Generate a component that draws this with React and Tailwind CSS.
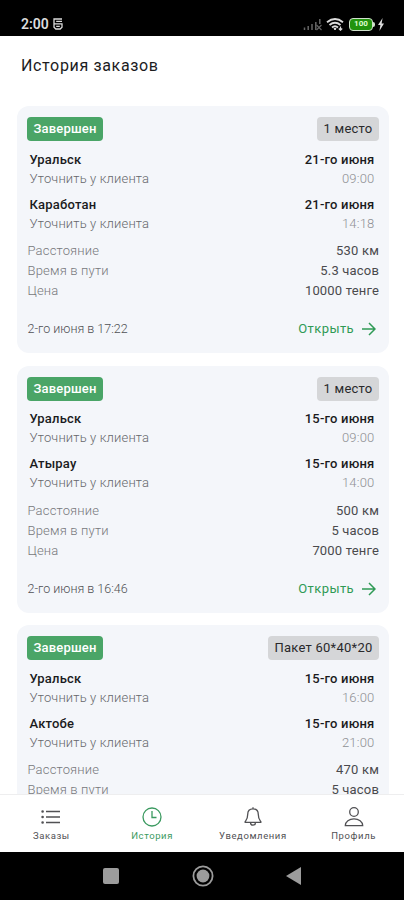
import React from "react";

const orders = [
  {
    id: 1,
    status: "Завершен",
    size: "1 место",
    from: { city: "Уральск", date: "21-го июня", time: "09:00" },
    to: { city: "Каработан", date: "21-го июня", time: "14:18" },
    distance: "530 км",
    duration: "5.3 часов",
    price: "10000 тенге",
    createdAt: "2-го июня в 17:22",
  },
  {
    id: 2,
    status: "Завершен",
    size: "1 место",
    from: { city: "Уральск", date: "15-го июня", time: "09:00" },
    to: { city: "Атырау", date: "15-го июня", time: "14:00" },
    distance: "500 км",
    duration: "5 часов",
    price: "7000 тенге",
    createdAt: "2-го июня в 16:46",
  },
  {
    id: 3,
    status: "Завершен",
    size: "Пакет 60*40*20",
    from: { city: "Уральск", date: "15-го июня", time: "16:00" },
    to: { city: "Актобе", date: "15-го июня", time: "21:00" },
    distance: "470 км",
    duration: "5 часов",
  },
];

const StatusBar = () => (
  <div className="flex h-9 shrink-0 items-center justify-between bg-black pt-3 pl-[21px] pr-5 text-[#dcdcdc]">
    <div className="flex items-center gap-1">
      <span className="text-[14px] leading-none font-semibold">2:00</span>
      <svg width="10" height="12" viewBox="0 0 10 12" fill="none" stroke="currentColor" strokeWidth="1.3">
        <path d="M9 1H1v8.2L2.8 11h4.4L9 9.2V5.8H1M3.2 3.4H9M3.2 8.3h3.6" />
      </svg>
    </div>
    <div className="flex items-center">
      <svg width="20" height="13" viewBox="0 0 20 13" fill="none" stroke="#666" strokeWidth="1.5">
        <path d="M1.5 12V9.5M5.2 12V8M9 12V6M12.8 12V4M16.8 6V1" />
        <path d="M13.5 7l5 5M18.5 7l-5 5" strokeWidth="1.1" />
      </svg>
      <svg className="ml-[3px]" width="18" height="13" viewBox="0 0 18 13" fill="none" stroke="currentColor" strokeWidth="1.9">
        <path d="M1 4.2Q9-2 17 4.2M3.5 7Q9 2.6 14.5 7M6 9.5Q9 7 12 9.5" />
        <path d="M8 10.5L9 12l1-1.5z" fill="currentColor" strokeWidth="1" />
        <path d="M14.5 8.5v3.5M12.8 10.5l1.7 1.7 1.7-1.7" strokeWidth="1.2" />
      </svg>
      <div className="ml-[5px] flex h-[13px] w-6 items-center justify-center rounded-[4px] border-[1.5px] border-[#d0e0cc] bg-[#22930d] text-[8px] leading-none font-bold text-[#dfffd0]">
        100
      </div>
      <div className="h-[5px] w-[2px] rounded-r bg-[#d0e0cc]" />
      <svg className="ml-[3px]" width="6" height="13" viewBox="0 0 6 13" fill="currentColor">
        <path d="M4.6 0L0 7h2.4L1.4 13 6 5.6H3.6z" />
      </svg>
    </div>
  </div>
);

const RoutePoint = ({ point, className }) => (
  <div className={`flex justify-between pl-[2.5px] pr-[4.5px] ${className}`}>
    <div>
      <p className="text-[13px] leading-[19px] font-medium tracking-[0.2px] text-[#1b1b1d]">{point.city}</p>
      <p className="text-[13px] leading-[19px] font-light tracking-[0.15px] text-[#66676b]">Уточнить у клиента</p>
    </div>
    <div className="text-right">
      <p className="text-[13px] leading-[19px] font-medium tracking-[0.2px] text-[#1b1b1d]">{point.date}</p>
      <p className="text-[13px] leading-[19px] font-light tracking-[0.2px] text-[#8f9094]">{point.time}</p>
    </div>
  </div>
);

const InfoRow = ({ label, value }) => (
  <div className="flex justify-between text-[13px] leading-5">
    <span className="pl-[0.5px] font-light tracking-[0.18px] text-[#77787c]">{label}</span>
    <span className="tracking-[0.18px] text-[#4a4a4d]">{value}</span>
  </div>
);

const OrderCard = ({ order }) => (
  <div className="h-[247px] shrink-0 rounded-xl bg-[#f4f6fa] px-2.5 pt-[11px]">
    <div className="flex items-center justify-between">
      <span className="flex h-6 items-center rounded-[4px] bg-[#4aa567] px-[6.5px] text-[13px] font-medium tracking-[0.18px] text-white">
        {order.status}
      </span>
      <span className="flex h-6 items-center rounded-[4px] bg-[#d5d6d8] px-[6.5px] text-[13px] tracking-[0.25px] text-[#29292b]">
        {order.size}
      </span>
    </div>

    <RoutePoint point={order.from} className="mt-[8.5px]" />
    <RoutePoint point={order.to} className="mt-[7px]" />

    <div className="mt-[8.5px]">
      <InfoRow label="Расстояние" value={order.distance} />
      <InfoRow label="Время в пути" value={order.duration} />
      {order.price && <InfoRow label="Цена" value={order.price} />}
    </div>

    {order.createdAt && (
      <div className="mt-[18px] flex items-center justify-between text-[13px] leading-5">
        <span className="pl-[0.5px] text-[12.5px] font-light text-[#4f5054]">{order.createdAt}</span>
        <button className="flex items-center gap-2 pr-[3px] tracking-[0.4px] text-[#2f9a55]">
          Открыть
          <svg width="14" height="14" viewBox="0 0 14 14" fill="none" stroke="currentColor" strokeWidth="1.5">
            <path d="M0 7h13M7 1l6 6-6 6" />
          </svg>
        </button>
      </div>
    )}
  </div>
);

const tabs = [
  {
    label: "Заказы",
    icon: (
      <>
        <path d="M5 5.5h14M5 11h14M5 16.5h14" />
        <path d="M1.6 5.5h.01M1.6 11h.01M1.6 16.5h.01" strokeWidth="2.6" strokeLinecap="round" />
      </>
    ),
  },
  {
    label: "История",
    active: true,
    icon: (
      <>
        <circle cx="10" cy="11" r="9" />
        <path d="M10 5v6.5h4.5" />
      </>
    ),
  },
  {
    label: "Уведомления",
    icon: (
      <>
        <path d="M10 2.8C6.6 2.8 4.7 5.2 4.7 8.5c0 4.3-1.2 5.2-2.5 7v.9h15.6v-.9c-1.3-1.8-2.5-2.7-2.5-7 0-3.3-1.9-5.7-5.3-5.7zM10 2.8V1.2" />
        <path d="M7.5 16.5c0 3.6 5 3.6 5 0" />
      </>
    ),
  },
  {
    label: "Профиль",
    icon: (
      <>
        <circle cx="10" cy="6" r="4.3" />
        <path d="M1.3 19.6c0-4 4-6.8 8.7-6.8s8.7 2.8 8.7 6.8z" />
      </>
    ),
  },
];

const BottomNav = () => (
  <nav className="grid h-[58px] shrink-0 grid-cols-4 border-t border-[#eeeeef] bg-white pl-px">
    {tabs.map((tab) => (
      <div
        key={tab.label}
        className={`flex flex-col items-center pt-[11px] ${tab.active ? "text-[#3b9a60]" : "text-[#515154]"}`}
      >
        <svg width="20" height="22" viewBox="0 0 20 22" fill="none" stroke="currentColor" strokeWidth="1.3">
          {tab.icon}
        </svg>
        <span className="mt-[2px] text-[9.5px] leading-3 tracking-[0.6px]">{tab.label}</span>
      </div>
    ))}
  </nav>
);

const SystemNav = () => (
  <div className="flex h-12 shrink-0 items-center justify-between bg-black px-[103px] text-[#9c9c9c]">
    <div className="h-4 w-4 rounded-[2px] bg-current" />
    <svg width="22" height="22" viewBox="0 0 22 22" fill="none" stroke="currentColor" strokeWidth="1.8">
      <circle cx="11" cy="11" r="9.6" />
      <circle cx="11" cy="11" r="6.4" fill="currentColor" stroke="none" />
    </svg>
    <svg width="15" height="18" viewBox="0 0 15 18" fill="currentColor">
      <path d="M15 0v18L0 9z" />
    </svg>
  </div>
);

export default function App() {
  return (
    <div className="flex h-[900px] w-[404px] flex-col overflow-hidden bg-white font-['Roboto','Liberation_Sans',sans-serif]">
      <StatusBar />
      <h1 className="h-[70px] shrink-0 pt-[18px] pl-[21px] text-base leading-6 tracking-[0.65px] text-[#1c1c1e]">
        История заказов
      </h1>
      <main className="flex min-h-0 flex-1 flex-col gap-[12.5px] overflow-hidden pl-[17px] pr-[15px]">
        {orders.map((order) => (
          <OrderCard key={order.id} order={order} />
        ))}
      </main>
      <BottomNav />
      <SystemNav />
    </div>
  );
}
